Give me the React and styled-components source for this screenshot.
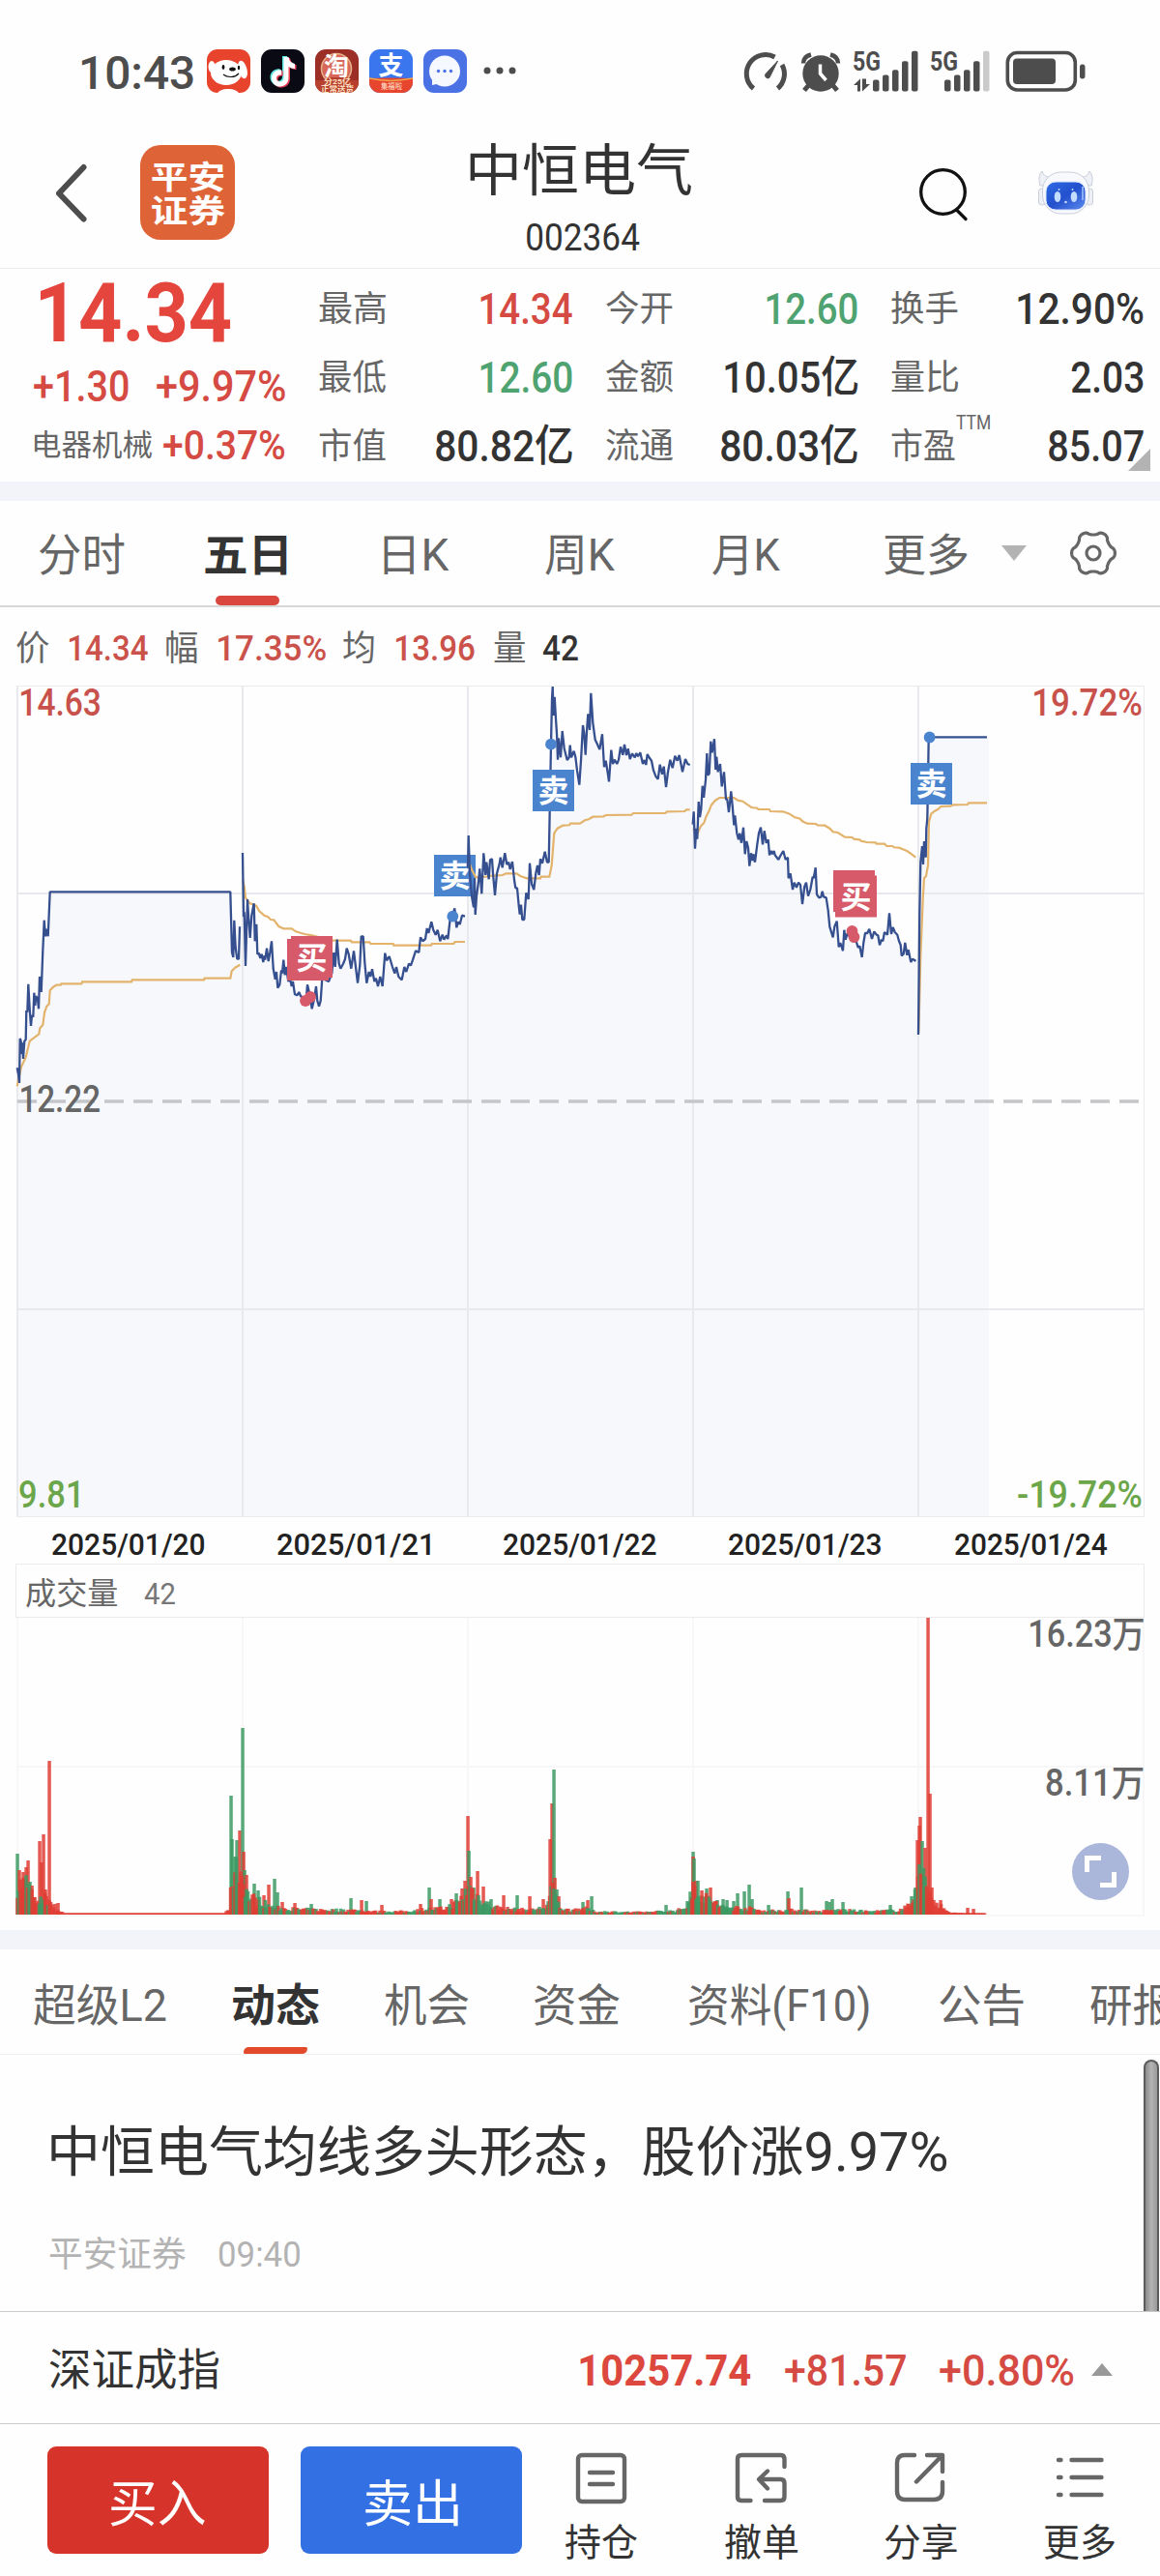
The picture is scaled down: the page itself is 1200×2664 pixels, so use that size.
import React from 'react';
import styled, { createGlobalStyle } from 'styled-components';

const FONT = 'Roboto, "Noto Sans CJK SC", sans-serif';
const RED = '#d54a42';
const GREEN = '#4fa371';
const INK = '#333333';
const GREY = '#666666';

const Global = createGlobalStyle`
  * { box-sizing: border-box; }
  html, body { margin: 0; padding: 0; background: #fefefe; }
  body { font-family: ${FONT}; color: ${INK}; }
  svg { display: block; flex: none; overflow: visible; }
`;

/* ---------- condensed text ---------- */

const ctx = document.createElement('canvas').getContext('2d');

const TextBox = styled.span`
  display: block;
  flex: none;
  white-space: nowrap;
  margin-left: ${(p) => p.$ml || 0}px;
  font-size: ${(p) => p.$size}px;
  font-weight: ${(p) => p.$weight};
  line-height: ${(p) => p.$lh || Math.round(p.$size * 1.1)}px;
  color: ${(p) => p.$color};
`;
const Glyphs = styled.span`
  display: inline-block;
  transform-origin: 0 50%;
`;

/* Squeezes a run of text so that its glyphs span exactly w pixels. */
function T({ children, w, size, weight = 400, color = INK, ml, lh }) {
  ctx.font = `${weight} ${size}px ${FONT}`;
  const m = ctx.measureText(children);
  const s = w / (m.actualBoundingBoxLeft + m.actualBoundingBoxRight);
  return (
    <TextBox $ml={ml} $size={size} $weight={weight} $color={color} $lh={lh} style={{ width: w }}>
      <Glyphs style={{ transform: `translate(${m.actualBoundingBoxLeft * s}px, 1.5px) scaleX(${s})` }}>
        {children}
      </Glyphs>
    </TextBox>
  );
}

/* ---------- layout ---------- */

const Page = styled.div`
  width: 1200px;
  height: 2664px;
  overflow: hidden;
  background: #fefefe;
  display: flex;
  flex-direction: column;
`;
const Band = styled.div`
  flex: none;
  height: 20px;
  background: #f3f4f9;
`;
const StatusBar = styled.div`
  flex: none;
  height: 127px;
  padding: 20px 0 0 84px;
  display: flex;
  align-items: center;
`;
const AppIcons = styled.div`
  display: flex;
  gap: 11px;
  margin-left: 14px;
`;
const StatusIcons = styled.div`
  margin-left: 230px;
`;
const Header = styled.div`
  flex: none;
  height: 151px;
  border-bottom: 1px solid #ececec;
  padding: 0 0 6px 55px;
  display: flex;
  align-items: center;
`;
const Logo = styled.div`
  width: 98px;
  height: 98px;
  border-radius: 21px;
  background: #de6437;
  margin-left: 50px;
  padding: 14px 0 0 12px;
`;
const Heading = styled.div`
  margin-left: 243px;
  width: 229px;
  height: 126px;
`;
const SearchSlot = styled.div`
  margin-left: 236px;
`;
const RobotSlot = styled.div`
  margin-left: 73px;
`;
const Quote = styled.div`
  flex: none;
  height: 220px;
  padding-left: 35px;
  display: flex;
`;
const PriceCol = styled.div`
  width: 295px;
`;
const Row = styled.div`
  display: flex;
  align-items: center;
  height: ${(p) => p.$h}px;
  padding-left: ${(p) => p.$pl || 0}px;
`;
const Stats = styled.div`
  position: relative;
  padding-top: 4px;
  display: grid;
  grid-template-columns: 262px 260px 261px;
  grid-auto-rows: 71px;
  column-gap: 35px;
`;
const Stat = styled.div`
  display: flex;
  align-items: center;
`;
const Push = styled.div`
  flex: 1;
`;
const Sup = styled.div`
  align-self: flex-start;
`;
const Corner = styled.div`
  position: absolute;
  right: -7px;
  bottom: 11px;
  border-left: 23px solid transparent;
  border-bottom: 23px solid #b3b3b3;
`;
const Tabs = styled.div`
  flex: none;
  height: ${(p) => p.$h}px;
  border-bottom: ${(p) => p.$line};
  padding: ${(p) => p.$pt || 0}px 0 0 ${(p) => p.$pl}px;
  display: flex;
  align-items: stretch;
`;
const Tab = styled.div`
  flex: none;
  position: relative;
  display: flex;
  align-items: center;
  margin-left: ${(p) => p.$ml || 0}px;
`;
const Underline = styled.div`
  position: absolute;
  bottom: 0;
  left: 11px;
  width: 66px;
  height: ${(p) => p.$h}px;
  border-radius: ${(p) => p.$radius};
  background: ${(p) => p.$color};
`;
const Triangle = styled.div`
  margin-left: ${(p) => p.$ml}px;
  border-left: ${(p) => p.$half}px solid transparent;
  border-right: ${(p) => p.$half}px solid transparent;
  border-${(p) => (p.$up ? 'bottom' : 'top')}: ${(p) => p.$h}px solid ${(p) => p.$color};
`;
const Legend = styled.div`
  flex: none;
  height: 81px;
  padding-left: 17px;
  display: flex;
  align-items: center;
`;
const Plot = styled.div`
  flex: none;
  position: relative;
  height: ${(p) => p.$h}px;
`;
const PlotLabel = styled.div`
  position: absolute;
  left: ${(p) => p.$x}px;
  top: ${(p) => p.$y}px;
`;
const Dates = styled.div`
  flex: none;
  height: 48px;
  padding: 4px 0 0 53.5px;
  display: flex;
  align-items: center;
`;
const VolumeHead = styled.div`
  flex: none;
  height: 56px;
  margin: 0 16px 0 16px;
  border: 1px solid #ebebeb;
  padding: 2px 0 0 10px;
  display: flex;
  align-items: center;
`;
const Expand = styled.div`
  position: absolute;
  left: 1108.5px;
  top: 233px;
  width: 59px;
  height: 59px;
  border-radius: 50%;
  background: #aab7da;
`;
const Article = styled.div`
  flex: none;
  position: relative;
  height: 265px;
  padding: 62px 0 0 51px;
`;
const Scrollbar = styled.div`
  position: absolute;
  top: 5px;
  right: 1px;
  width: 16px;
  height: 260px;
  border: 2px solid #5c5c5c;
  border-bottom: 0;
  border-radius: 8px 8px 0 0;
  background: linear-gradient(90deg, #8c8c8c, #b4b4b4 50%, #999);
`;
const IndexRow = styled.div`
  flex: none;
  height: 116px;
  border-top: 1px solid #c9c9c9;
  padding: 3px 0 0 51px;
  display: flex;
  align-items: center;
`;
const ActionBar = styled.div`
  flex: none;
  height: 158px;
  border-top: 1px solid #c9c9c9;
  padding: 23px 0 0 49px;
  display: flex;
  align-items: flex-start;
`;
const TradeButton = styled.div`
  width: 229px;
  height: 111px;
  margin-right: 33px;
  border-radius: 9px;
  background: ${(p) => p.$color};
  display: flex;
  align-items: center;
  justify-content: center;
  padding-top: 5px;
`;
const Action = styled.div`
  margin-left: ${(p) => p.$ml}px;
  padding-top: 6px;
  display: flex;
  flex-direction: column;
  align-items: center;
  gap: 13px;
`;

/* ---------- status bar drawings ---------- */

const tile = (bg, body, key) => (
  <svg key={key} width="45" height="45" viewBox="0 0 45 45">
    <defs>
      <clipPath id={`clip-${key}`}><rect width="45" height="45" rx="11" /></clipPath>
    </defs>
    <g clipPath={`url(#clip-${key})`}>
      <rect width="45" height="45" fill={bg} />
      {body}
    </g>
  </svg>
);

const note = 'M25 8h5c.6 4 2.800 6.500 6.500 7v5c-2.500 0-4.600-.8-6.500-2v11.500c0 5.500-4 9-8.700 9-5 0-8.800-3.800-8.800-8.600 0-5.400 4.500-9.300 10.200-8.500v5.200c-2.800-.8-5.200.8-5.200 3.300 0 2 1.600 3.600 3.700 3.600 2.300 0 3.800-1.500 3.800-4.200z';

const Apps = () => (
  <AppIcons>
    {tile('#e8432d', (
      <g>
        <ellipse cx="22" cy="46" rx="11" ry="5" fill="#fff" />
        <ellipse cx="5" cy="18" rx="3.500" ry="6" fill="#fff" />
        <ellipse cx="37" cy="21" rx="4.500" ry="9.500" transform="rotate(-14 37 21)" fill="#fff" />
        <ellipse cx="20" cy="24" rx="16" ry="13" fill="#fff" />
        <ellipse cx="26.500" cy="20.500" rx="3.300" ry="2" fill="#111" />
        <ellipse cx="17" cy="18.500" rx="1.400" ry="2.400" fill="#111" />
        <ellipse cx="33" cy="19" rx="1.200" ry="2.200" fill="#111" />
        <path d="M17 26c4 3.500 12 3.500 16-1" fill="none" stroke="#111" strokeWidth="1.200" />
      </g>
    ), 'dog')}
    {tile('#0a0a14', (
      <g>
        <path d={note} fill="#5de3e0" transform="translate(-3 -1)" />
        <path d={note} fill="#e8415a" transform="translate(0 1)" />
        <path d={note} fill="#fff" transform="translate(-1.500 0)" />
      </g>
    ), 'note')}
    {tile('#9b2f26', (
      <g>
        <circle cx="22" cy="20" r="15.500" fill="#d8675a" />
        <circle cx="22" cy="20" r="15.500" fill="none" stroke="#e6b48a" strokeWidth="1.500" />
        <text x="22" y="27" fontSize="26" fontWeight="700" fill="#fff" textAnchor="middle">淘</text>
        <path d="M0 32h9l3-3h21l3 3h9v13H0z" fill="#b8402f" />
        <text x="23" y="35.500" fontSize="7.500" fontWeight="700" fill="#ffe3c4" textAnchor="middle" textLength="28" lengthAdjust="spacingAndGlyphs">分25亿</text>
        <text x="23" y="43.500" fontSize="8" fontWeight="700" fill="#ffe3c4" textAnchor="middle" textLength="34" lengthAdjust="spacingAndGlyphs">正常送货</text>
      </g>
    ), 'tao')}
    {tile('#3a76ee', (
      <g>
        <text x="22.500" y="25.500" fontSize="26" fontWeight="700" fill="#fff" textAnchor="middle">支</text>
        <path d="M0 30q22-1 45 0v15H0z" fill="#e8452f" />
        <path d="M0 30q22 5 45 0" fill="none" stroke="#f0a54a" strokeWidth="1.500" />
        <text x="23" y="40.500" fontSize="8" fill="#ffe9d2" textAnchor="middle" textLength="22" lengthAdjust="spacingAndGlyphs">集福啦</text>
      </g>
    ), 'pay')}
    {tile('#4a72e4', (
      <g>
        <circle cx="22" cy="22.500" r="16" fill="#f6f8ff" />
        <path d="M9 30v7l9-2z" fill="#f6f8ff" />
        {[15.5, 22, 28.5].map((x) => <circle key={x} cx={x} cy="22.500" r="1.700" fill="#4a72e4" />)}
      </g>
    ), 'chat')}
    <svg width="44" height="45" viewBox="0 0 44 45">
      {[10, 23, 36].map((x) => <circle key={x} cx={x} cy="22" r="3.500" fill="#4d4d4d" />)}
    </svg>
  </AppIcons>
);

const signal = (x0, dim) => [82, 77, 71.7, 62.7, 52.3].map((top, i) => (
  <rect key={i} x={x0 + i * 10} y={top} width="6.500" height={94 - top} rx="2" fill={dim && i === 4 ? '#cacaca' : '#4d4d4d'} />
));

const Indicators = () => (
  <svg width="360" height="46" viewBox="768 50.500 360 46">
    <g fill="none" stroke="#4d4d4d" strokeWidth="5">
      <path d="M779.500 91A19.700 19.700 0 0 1 801.500 58.500" />
      <path d="M809 66.500A19.700 19.700 0 0 1 804.500 91" />
    </g>
    <path d="M804.500 62.500l-12.500 13.500a2.800 2.800 0 0 0 4 3.800z" fill="#4d4d4d" stroke="#4d4d4d" />
    <circle cx="849" cy="75.500" r="18.700" fill="#4d4d4d" />
    <path d="M831 65q0-7 8-9M867 65q0-7-8-9" fill="none" stroke="#4d4d4d" strokeWidth="4.500" />
    <path d="M837 87l-5 6M861 87l5 6" stroke="#4d4d4d" strokeWidth="5" />
    <path d="M848.500 66v9.500l6 7" fill="none" stroke="#fff" strokeWidth="3.500" />
    <text x="882" y="72" fontSize="27" fontWeight="700" fill="#4d4d4d" textLength="29" lengthAdjust="spacingAndGlyphs">5G</text>
    <path d="M883 87.500l7-6.500v13h-3v-6.500zM900 86.500h-4V81h-4v13z" fill="#4d4d4d" />
    {signal(903, false)}
    <text x="962" y="72" fontSize="27" fontWeight="700" fill="#4d4d4d" textLength="29" lengthAdjust="spacingAndGlyphs">5G</text>
    {signal(977, true)}
    <rect x="1042.300" y="54" width="70" height="38.500" rx="10" fill="none" stroke="#4d4d4d" strokeWidth="3.600" />
    <rect x="1048" y="60" width="44" height="26.500" rx="4" fill="#4d4d4d" />
    <rect x="1117" y="66" width="5.500" height="15" rx="2.700" fill="#4d4d4d" />
  </svg>
);

const Robot = () => (
  <svg width="57" height="46" viewBox="0 0 57 46">
    <defs>
      <linearGradient id="visor" x1="0" y1="0" x2="1" y2="1">
        <stop offset="0" stopColor="#2f6be6" />
        <stop offset=".5" stopColor="#2350cc" />
        <stop offset="1" stopColor="#5d8cf0" />
      </linearGradient>
    </defs>
    <g fill="#eef0f6" stroke="#c9cedb" strokeWidth="1">
      <path d="M2 16Q-1 6 4 1q2 6 7 6l-3 9zM55 16q3-10-2-15-2 6-7 6l3 9z" />
      <rect x=".5" y="19" width="7" height="17" rx="3" />
      <rect x="49.500" y="19" width="7" height="17" rx="3" />
      <rect x="4.500" y="2" width="48" height="43" rx="19" fill="#f7f9fd" />
    </g>
    <rect x="8" y="12" width="41" height="29" rx="10" fill="url(#visor)" stroke="#dbe5fb" />
    <g fill="#c4dcff">
      <ellipse cx="20" cy="27.500" rx="3.300" ry="5.500" />
      <ellipse cx="37" cy="27.500" rx="3.300" ry="5.500" />
      <circle cx="28.500" cy="33" r="1.300" />
      <circle cx="21.500" cy="20" r="1" />
      <circle cx="35.500" cy="20" r="1" />
    </g>
    <path d="M46 17v14" stroke="#a9c6fb" strokeWidth="1.500" />
  </svg>
);

const Gear = () => {
  const pts = [];
  for (let i = 0; i <= 120; i += 1) {
    const a = (i / 120) * Math.PI * 2;
    const c = Math.cos(6 * a);
    const r = 20.5 - 1.9 * Math.sign(c) * Math.abs(c) ** 0.6;
    pts.push(`${(24 + r * Math.cos(a - Math.PI / 2)).toFixed(1)},${(24 + r * 1.02 * Math.sin(a - Math.PI / 2)).toFixed(1)}`);
  }
  return (
    <svg width="48" height="48" viewBox="0 0 48 48" fill="none" stroke="#666" strokeWidth="3.200" strokeLinejoin="round">
      <polygon points={pts.join(' ')} />
      <circle cx="24" cy="24" r="7" />
    </svg>
  );
};

/* ---------- price chart ---------- */

/* Traces are stored in thirds of a pixel, measured from 19px above the plot. */
const DAYS = [
  { ox: 0,
    price: '53,1243 57,1262 60,1290 62,1152 65,1160 67,1200 69,1165 72,1215 76,1160 80,1155 82,1065 85,1070 88,983 92,1060 96,1113 99,1080 103,1085 106,1010 109,1050 112,1020 117,1030 120,1060 123,960 126,975 128,1008 133,880 137,785 141,835 144,812 149,835 155,697 715,697 720,885 724,900 727,785 731,870 736,905 741,905 744,805',
    avg: '53,1300 66,1240 80,1210 92,1160 105,1150 121,1138 124,1120 133,1110 138,1072 145,1052 152,1045 155,1003 165,992 175,986 188,986 190,982 253,982 255,976 408,976 410,970 633,970 635,965 715,965 719,943 730,932 745,923' },
  { ox: 0,
    price: '753,576 756,775 758,760 762,927 768,720 771,770 776,840 781,770 788,733 791,850 796,797 799,890 803,887 808,903 812,890 817,915 821,895 823,908 828,872 833,912 838,885 843,850 848,935 854,968 858,945 862,995 868,985 873,940 876,950 880,908 884,955 888,930 895,975 900,965 905,990 909,975 915,1015 922,1018 928,1008 933,1020 945,1030 950,1030 954,985 960,1010 968,1060 975,1030 981,990 985,1035 990,1052 995,1035 1000,965 1020,975 1030,950 1036,885 1040,930 1046,845 1052,920 1057,935 1065,920 1071,905 1076,872 1082,890 1090,935 1098,880 1104,930 1110,980 1117,925 1121,835 1127,835 1132,915 1138,980 1145,945 1150,960 1155,937 1162,975 1167,965 1173,990 1180,960 1187,990 1195,887 1200,910 1208,897 1218,930 1225,950 1230,930 1237,960 1247,970 1255,930 1261,945 1269,920 1275,925 1281,908 1290,880 1300,885 1305,838 1312,850 1320,843 1325,810 1330,825 1339,790 1345,815 1352,830 1358,815 1366,850 1373,830 1378,845 1386,832 1390,843 1397,780 1405,770 1411,748 1417,808 1422,790 1427,798 1434,770 1443,773',
    avg: '753,660 758,680 762,715 775,732 795,740 805,757 820,770 832,775 840,783 850,784 865,804 880,811 905,811 918,820 945,828 968,832 1032,848 1088,848 1092,853 1147,853 1150,858 1220,858 1222,863 1338,863 1340,858 1408,858 1412,852 1443,852' },
  { ox: 1380,
    price: '72,622 74,522 78,640 84,710 90,745 93,655 95,768 99,710 104,672 109,625 115,703 121,577 127,645 130,605 137,658 141,598 147,595 150,640 156,708 162,640 170,610 173,590 179,622 187,577 193,612 199,605 203,627 210,603 216,660 220,685 225,685 230,740 233,767 237,737 241,783 247,783 253,700 260,720 264,608 270,672 277,690 283,640 288,615 293,645 297,595 303,608 311,572 318,605 323,605 326,447 330,240 333,100 335,60 338,150 341,92 345,160 348,205 351,287 354,220 360,280 365,198 371,252 380,288 386,280 389,242 393,280 401,260 406,278 411,320 418,365 423,290 429,180 433,205 437,272 441,200 445,145 450,195 454,80 460,172 467,225 472,235 481,255 489,208 495,310 500,290 505,320 510,355 517,257 522,300 527,287 535,300 540,287 546,247 553,272 558,240 564,273 569,253 575,285 582,268 590,280 595,267 600,277 607,265 615,300 620,288 625,303 629,270 636,282 642,290 648,320 655,338 662,347 668,302 675,332 680,308 687,372 693,325 700,287 707,313 715,275 722,290 728,273 738,325 747,285 754,300 761,303',
    avg: '74,600 85,630 97,652 130,650 148,647 180,645 190,640 223,640 235,648 255,655 297,655 299,650 325,650 332,615 340,515 350,500 367,491 387,490 390,485 420,485 435,475 447,472 460,464 493,463 500,459 580,458 585,453 685,453 690,448 745,447 750,442 761,442' },
  { ox: 2100,
    price: '50,488 53,448 57,563 61,500 64,533 68,417 72,465 76,440 80,368 84,405 90,350 94,267 97,335 101,330 106,230 110,265 117,223 121,318 124,278 128,325 135,300 140,370 147,325 153,410 157,410 162,450 169,385 174,440 178,490 181,460 187,515 192,535 196,515 201,545 207,497 212,580 217,540 222,560 226,617 231,577 235,600 238,580 243,605 250,550 255,515 261,497 267,550 272,508 278,545 284,535 288,583 293,570 297,580 302,570 305,583 316,597 322,585 331,570 338,597 345,590 347,655 353,640 360,690 365,668 372,683 378,668 384,675 390,735 397,680 402,668 408,710 415,690 422,650 425,655 431,622 435,705 442,715 448,713 452,695 456,712 464,715 470,755 475,805 485,838 490,805 497,788 503,868 508,855 516,880 520,815 524,845 530,825 545,850 557,850 563,870 568,865 575,900 580,855 585,825 592,825 598,812 606,843 613,820 620,830 625,832 630,862 636,845 640,850 645,822 654,830 660,763 666,828 671,807 677,822 685,830 690,850 695,862 698,895 704,890 709,855 715,893 719,877 727,915 732,905 737,908 742,912',
    avg: '52,500 63,520 75,493 85,483 92,462 101,445 107,428 120,413 133,405 178,405 190,413 205,416 232,435 250,437 253,441 287,441 291,447 330,448 350,455 365,465 383,470 390,478 405,485 432,486 437,490 460,491 475,500 485,511 500,513 522,527 545,528 550,533 568,535 572,539 590,543 617,544 620,548 645,548 652,555 670,555 675,559 690,560 715,570 725,577 742,590' },
  { ox: 2100,
    price: '750,1140 754,760 757,605 762,555 765,612 768,540 773,590 775,500 778,470 780,360 782,217 963,217',
    avg: '751,1135 757,900 764,720 768,655 774,648 780,615 783,480 790,455 800,447 812,440 820,432 850,431 858,427 903,426 906,421 963,421' },
];

const toPx = (s, ox) => s.split(' ').map((p) => {
  const [x, y] = p.split(',').map(Number);
  return [(x + ox) / 3, y / 3 - 19];
});
const join = (pts) => pts.map(([x, y]) => `${x.toFixed(1)},${y.toFixed(1)}`).join(' ');
const EDGES = [18, 251, 484, 717, 950, 1023];

const Marker = ({ sell, rects, dots, tx, ty }) => (
  <g fill={sell ? '#4a84cf' : '#d65a6a'}>
    {rects.map(([x, y]) => <rect key={x} x={x} y={y} width="43" height="43" />)}
    {dots.map(([x, y]) => <circle key={x} cx={x} cy={y} r="5.900" />)}
    <text x={tx} y={ty} fontSize="32" fontWeight="700" fill="#fff" textAnchor="middle">{sell ? '卖' : '买'}</text>
  </g>
);

const priceLine = (d) => (
  <polyline points={join(toPx(d.price, d.ox))} fill="none" stroke="#354f8f" strokeWidth="2.300" strokeLinejoin="bevel" />
);
const avgLine = (d) => (
  <polyline points={join(toPx(d.avg, d.ox))} fill="none" stroke="#e3b36c" strokeWidth="2.200" />
);

const PriceChart = () => (
  <svg width="1200" height="860" viewBox="0 0 1200 860">
    {DAYS.map((d, i) => {
      const pts = toPx(d.price, d.ox);
      const lastY = pts[pts.length - 1][1];
      return (
        <polygon
          key={i}
          fill="#f6f8fc"
          points={`${EDGES[i]},859 ${join(pts)} ${EDGES[i + 1]},${lastY.toFixed(1)} ${EDGES[i + 1]},859`}
        />
      );
    })}
    <g stroke="#e8e9ec" strokeWidth="2">
      <path d="M17 215H1183M17 645H1183" />
      {[18, 251, 484, 717, 950].map((x) => <path key={x} d={`M${x} 0V859`} />)}
    </g>
    <path d="M17 .5H1183.500V859.500H17" fill="none" stroke="#ebebeb" />
    <path d="M18 430H1183" stroke="#c6c6ca" strokeWidth="3.500" strokeDasharray="20 10" />
    {avgLine(DAYS[0])}{priceLine(DAYS[0])}
    {avgLine(DAYS[1])}{priceLine(DAYS[1])}
    <Marker rects={[[297, 262], [301, 259]]} dots={[[316, 326], [321, 322]]} tx="322.500" ty="293" />
    <Marker sell rects={[[449, 175]]} dots={[[468.3, 238.700]]} tx="470.500" ty="208" />
    {avgLine(DAYS[2])}{priceLine(DAYS[2])}
    <Marker sell rects={[[551, 87]]} dots={[[570, 60.700]]} tx="572.500" ty="120" />
    {avgLine(DAYS[3])}{priceLine(DAYS[3])}
    <Marker rects={[[862, 191], [864, 196.500]]} dots={[[881.5, 254], [883.500, 260]]} tx="885.500" ty="230" />
    {avgLine(DAYS[4])}{priceLine(DAYS[4])}
    <Marker sell rects={[[942, 80]]} dots={[[961.6, 53.500]]} tx="963.500" ty="113" />
  </svg>
);

/* ---------- volume chart ---------- */

/* [x, height] outline of the quiet trading between spikes */
const ENVELOPE = [[18, 38], [28, 42], [33, 25], [38, 12], [44, 22], [50, 20], [56, 12], [62, 4], [66, 2], [72, 1], [230, 1], [237, 5], [240, 50], [248, 60], [253, 42], [257, 24], [264, 20], [272, 16], [280, 10], [290, 8], [310, 7], [330, 6], [360, 6], [390, 4], [420, 4], [440, 7], [460, 8], [472, 15], [480, 24], [485, 38], [492, 26], [500, 18], [510, 10], [530, 7], [550, 6], [565, 10], [572, 35], [577, 14], [584, 6], [605, 8], [615, 4], [660, 3], [700, 5], [712, 12], [717, 38], [728, 22], [736, 20], [745, 10], [775, 8], [790, 5], [830, 6], [845, 4], [870, 6], [900, 4], [930, 6], [942, 12], [949, 50], [956, 55], [962, 30], [967, 12], [973, 12], [980, 4], [990, 2], [1020, 1]];

/* [x, height, up] single bars that stand out */
const SPIKES = [[18, 63, 0], [20, 46, 1], [24, 44, 1], [27, 49, 1], [29, 56, 1], [31, 34, 0], [33, 30, 1], [35, 18, 1], [41, 76, 1], [43, 54, 1], [45, 83, 1], [47, 26, 1], [51, 159, 1], [60, 12, 1], [239, 123, 0], [240, 78, 0], [243, 60, 0], [245, 77, 0], [248, 87, 1], [251, 193, 0], [252, 65, 1], [253, 46, 0], [255, 41, 1], [263, 32, 0], [267, 25, 0], [273, 20, 1], [278, 31, 1], [284, 37, 0], [287, 23, 0], [292, 13, 1], [305, 12, 1], [322, 11, 0], [363, 17, 0], [374, 15, 1], [379, 14, 0], [395, 10, 1], [435, 11, 1], [444, 28, 0], [446, 16, 1], [455, 16, 0], [467, 16, 1], [472, 22, 0], [478, 27, 1], [481, 35, 1], [484, 102, 1], [485, 66, 0], [487, 39, 1], [490, 28, 0], [494, 45, 1], [500, 29, 1], [508, 16, 0], [521, 20, 1], [535, 20, 0], [548, 19, 1], [562, 16, 1], [569, 78, 1], [571, 115, 1], [573, 150, 0], [574, 38, 1], [576, 26, 0], [578, 19, 1], [603, 13, 0], [608, 15, 1], [612, 19, 0], [689, 10, 0], [711, 14, 0], [715, 18, 1], [717, 65, 0], [717, 60, 1], [718, 58, 0], [720, 35, 1], [722, 35, 0], [726, 25, 1], [731, 27, 0], [735, 28, 1], [742, 15, 0], [748, 16, 0], [752, 15, 0], [759, 14, 0], [763, 22, 0], [770, 24, 0], [775, 31, 0], [778, 16, 0], [795, 10, 0], [815, 24, 0], [816, 17, 1], [829, 28, 0], [855, 14, 0], [858, 13, 0], [861, 16, 0], [872, 13, 0], [921, 10, 0], [940, 11, 1], [943, 19, 0], [947, 28, 0], [949, 77, 1], [951, 92, 1], [952, 101, 1], [954, 76, 0], [957, 69, 1], [960, 307, 1], [962, 125, 1], [964, 28, 1], [973, 15, 1], [1001, 7, 1], [1007, 6, 1]];

const envelopeAt = (x) => {
  for (let i = 1; i < ENVELOPE.length; i += 1) {
    const [x1, h1] = ENVELOPE[i];
    if (x <= x1) {
      const [x0, h0] = ENVELOPE[i - 1];
      return h0 + ((h1 - h0) * (x - x0)) / (x1 - x0);
    }
  }
  return 1;
};

const VolumeChart = () => {
  const bars = [];
  let seed = 7;
  const rnd = () => {
    seed = (seed * 16807) % 2147483647;
    return seed / 2147483647;
  };
  for (let x = 18; x < 1020; x += 1.5) {
    const rising = (x > 50 && x < 238) || x > 957;
    bars.push([x, Math.max(1.5, envelopeAt(x) * (0.45 + rnd() * 0.65)), rising || rnd() > 0.5]);
  }
  return (
    <svg width="1200" height="323" viewBox="0 0 1200 323">
      <g stroke="#f7f7f7" strokeWidth="2">
        <path d="M17 154H1183M1183 0V308H17" fill="none" />
        {[18, 251, 484, 717, 950].map((x) => <path key={x} d={`M${x} 0V307`} />)}
      </g>
      <g fillOpacity=".85">
        {[...SPIKES, ...bars].map(([x, h, up], i) => (
          <rect key={i} x={x - 1.7} y={307 - h} width="3.500" height={h} fill={up ? '#df3d34' : '#3c9a64'} />
        ))}
      </g>
    </svg>
  );
};

/* ---------- bottom icons ---------- */

const Icon = ({ children }) => (
  <svg width="54" height="54" viewBox="0 0 54 54" fill="none" stroke="#666" strokeWidth="4.400" strokeLinecap="round" strokeLinejoin="round">
    {children}
  </svg>
);
const HoldIcon = () => (
  <Icon><rect x="3" y="3" width="48" height="48" rx="4" /><path d="M15 21h24M15 33h24" /></Icon>
);
const CancelIcon = () => (
  <Icon>
    <path d="M51.500 15V7q0-4-4-4H7Q3 3 3 7v39q0 4 4 4h9.500" />
    <path d="M31 50h16.500q4 0 4-4V32q0-4-4-4H26M34 19.500L25 28l9 9.500" />
  </Icon>
);
const ShareIcon = () => (
  <Icon>
    <path d="M21 3h-10Q3 3 3 11v29q0 9 8 9h30q9 0 9-9v-9M34 3h16v17M49 4L23 30.500" />
  </Icon>
);
const ListIcon = () => (
  <Icon>
    <path d="M5 8h2.500M5 26h2.500M5 44h2.500M18.500 8h31M18.500 26h31M18.500 44h31" />
  </Icon>
);

/* ---------- data ---------- */

const STATS = [
  ['最高', '14.34', 95, RED], ['今开', '12.60', 94, GREEN], ['换手', '12.90%', 130, INK],
  ['最低', '12.60', 95, GREEN], ['金额', '10.05亿', 137.5, INK], ['量比', '2.03', 75, INK],
  ['市值', '80.82亿', 141, INK], ['流通', '80.03亿', 141, INK], ['市盈', '85.07', 98, INK],
];
const PERIODS = [['分时', 88, 0], ['五日', 85, 83], ['日K', 67, 100.5], ['周K', 72, 99], ['月K', 70, 101.500], ['更多', 86, 108]];
const LEGEND = [['价', 33.5, 0], ['14.34', 81.5, 21.5], ['幅', 32.5, 18.500], ['17.35%', 111, 21.5], ['均', 32, 18], ['13.96', 81, 23], ['量', 32.5, 19.5], ['42', 36, 18.5]];
const DATES = [['2025/01/20', 0], ['2025/01/21', 75.5], ['2025/01/22', 76.5], ['2025/01/23', 75.5], ['2025/01/24', 76.5]];
const SECTIONS = [['超级L2', 137, 0], ['动态', 89, 69], ['机会', 87, 68], ['资金', 88, 68], ['资料(F10)', 185.5, 72], ['公告', 87, 73.5], ['研报', 87, 69]];
const ACTIONS = [['持仓', 74, 12, HoldIcon], ['撤单', 75, 90.5, CancelIcon], ['分享', 74.5, 90, ShareIcon], ['更多', 73, 91, ListIcon]];

export default function App() {
  return (
    <Page lang="zh-CN">
      <Global />
      <StatusBar>
        <T w={116} size={48} weight={500} color="#4d4d4d">10:43</T>
        <Apps />
        <StatusIcons><Indicators /></StatusIcons>
      </StatusBar>
      <Header>
        <svg width="40" height="64" viewBox="0 0 40 64" fill="none" stroke="#4d4d4d" strokeWidth="6" strokeLinecap="round" strokeLinejoin="round">
          <path d="M31.500 6L6 33l25.500 26.500" />
        </svg>
        <Logo>
          <T w={75} size={33} weight={700} color="#fff" lh={35}>平安</T>
          <T w={76} size={33} weight={700} color="#fff" lh={35}>证券</T>
        </Logo>
        <Heading>
          <T w={229} size={58} lh={78}>中恒电气</T>
          <T w={117} size={39} ml={59} lh={60}>002364</T>
        </Heading>
        <SearchSlot>
          <svg width="50" height="54" viewBox="0 0 50 54" fill="none" stroke="#111" strokeWidth="3.300" strokeLinecap="round">
            <circle cx="24.500" cy="26.500" r="22.800" />
            <path d="M39.500 46l8.500 8.500" />
          </svg>
        </SearchSlot>
        <RobotSlot><Robot /></RobotSlot>
      </Header>
      <Quote>
        <PriceCol>
          <Row $h={87} $pl={7}><T w={197} size={86} weight={700} color="#e4453c">14.34</T></Row>
          <Row $h={66}>
            <T w={98} size={45} weight={500} color={RED}>+1.30</T>
            <T w={133.5} size={45} weight={500} color={RED} ml={28.5}>+9.97%</T>
          </Row>
          <Row $h={56}>
            <T w={122} size={31} color={GREY}>电器机械</T>
            <T w={126} size={42} weight={500} color={RED} ml={12}>+0.37%</T>
          </Row>
        </PriceCol>
        <Stats>
          {STATS.map(([label, value, w, color], i) => (
            <Stat key={label}>
              <T w={i === 8 ? 66 : 69} size={36} color={GREY}>{label}</T>
              {i === 8 && <Sup><T w={35} size={20} color={GREY} ml={1} lh={22}>TTM</T></Sup>}
              <Push />
              <T w={w} size={45} weight={500} color={color}>{value}</T>
            </Stat>
          ))}
          <Corner />
        </Stats>
      </Quote>
      <Band />
      <Tabs $h={110} $line="2px solid #d8d8d8" $pl={41}>
        {PERIODS.map(([label, w, ml], i) => (
          <Tab key={label} $ml={ml}>
            <T w={w} size={46} weight={i === 1 ? 700 : 400} color={i === 1 ? INK : GREY}>{label}</T>
            {i === 1 && <Underline $h={10} $radius="5px" $color="#d9473f" />}
          </Tab>
        ))}
        <Tab><Triangle $ml={35} $half={13} $h={16.5} $color="#b3b3b3" /></Tab>
        <Tab $ml={45}><Gear /></Tab>
      </Tabs>
      <Legend>
        {LEGEND.map(([text, w, ml], i) => (
          <T key={text} w={w} ml={ml} size={i % 2 ? 37 : 36} color={i % 2 ? (i === 7 ? INK : '#cb524a') : GREY} weight={i % 2 ? 500 : 400}>{text}</T>
        ))}
      </Legend>
      <Plot $h={860}>
        <PriceChart />
        <PlotLabel $x={21.5} $y={-5}><T w={81.5} size={38} weight={500} color="#c8524b" lh={42}>14.63</T></PlotLabel>
        <PlotLabel $x={21.5} $y={404.5}><T w={81.5} size={38} weight={500} color={GREY} lh={42}>12.22</T></PlotLabel>
        <PlotLabel $x={19.5} $y={814}><T w={61.5} size={38} weight={500} color="#6ca64a" lh={42}>9.81</T></PlotLabel>
        <PlotLabel $x={1070} $y={-5}><T w={111} size={38} weight={500} color="#c8524b" lh={42}>19.72%</T></PlotLabel>
        <PlotLabel $x={1053} $y={814}><T w={128} size={38} weight={500} color="#6ca64a" lh={42}>-19.72%</T></PlotLabel>
      </Plot>
      <Dates>
        {DATES.map(([d, ml]) => <T key={d} w={157.5} size={32} weight={500} color="#222" ml={ml}>{d}</T>)}
      </Dates>
      <VolumeHead>
        <T w={94.5} size={32} color={GREY}>成交量</T>
        <T w={32} size={32} color="#777" ml={27}>42</T>
      </VolumeHead>
      <Plot $h={323}>
        <VolumeChart />
        <PlotLabel $x={1065.5} $y={-6}><T w={117} size={38} weight={500} color={GREY} lh={42}>16.23万</T></PlotLabel>
        <PlotLabel $x={1082} $y={148}><T w={100.5} size={38} weight={500} color={GREY} lh={42}>8.11万</T></PlotLabel>
        <Expand>
          <svg width="59" height="59" viewBox="0 0 59 59" fill="none" stroke="#fff" strokeWidth="5">
            <path d="M15.500 30V15.500H30M29 43.500h14.500V30" />
          </svg>
        </Expand>
      </Plot>
      <Band />
      <Tabs $h={109} $line="1px solid #f0f0f0" $pl={35} $pt={4}>
        {SECTIONS.map(([label, w, ml], i) => (
          <Tab key={label} $ml={ml}>
            <T w={w} size={46} weight={i === 1 ? 700 : 400} color={i === 1 ? INK : GREY}>{label}</T>
            {i === 1 && <Underline $h={7} $radius="7px 2px 7px 2px" $color="#e3492b" />}
          </Tab>
        ))}
      </Tabs>
      <Article>
        <Row $h={74} $pl={2}><T w={926.5} size={56}>中恒电气均线多头形态，股价涨9.97%</T></Row>
        <Row $h={138}>
          <T w={141.5} size={36} color="#b3b3b3">平安证券</T>
          <T w={83.5} size={36} color="#b3b3b3" ml={34.5}>09:40</T>
        </Row>
        <Scrollbar />
      </Article>
      <IndexRow>
        <T w={176} size={45}>深证成指</T>
        <T w={176.5} size={45} weight={700} color="#dc473e" ml={372.5}>10257.74</T>
        <T w={125} size={45} weight={500} color={RED} ml={36}>+81.57</T>
        <T w={139} size={45} weight={500} color={RED} ml={34.5}>+0.80%</T>
        <Triangle $up $ml={18.5} $half={11} $h={13} $color="#999" />
      </IndexRow>
      <ActionBar>
        <TradeButton $color="#d6342a"><T w={98.500} size={52} color="#fff">买入</T></TradeButton>
        <TradeButton $color="#3370e3"><T w={96} size={52} color="#fff">卖出</T></TradeButton>
        {ACTIONS.map(([label, w, ml, Glyph]) => (
          <Action key={label} $ml={ml}>
            <Glyph />
            <T w={w} size={39} lh={50}>{label}</T>
          </Action>
        ))}
      </ActionBar>
    </Page>
  );
}
